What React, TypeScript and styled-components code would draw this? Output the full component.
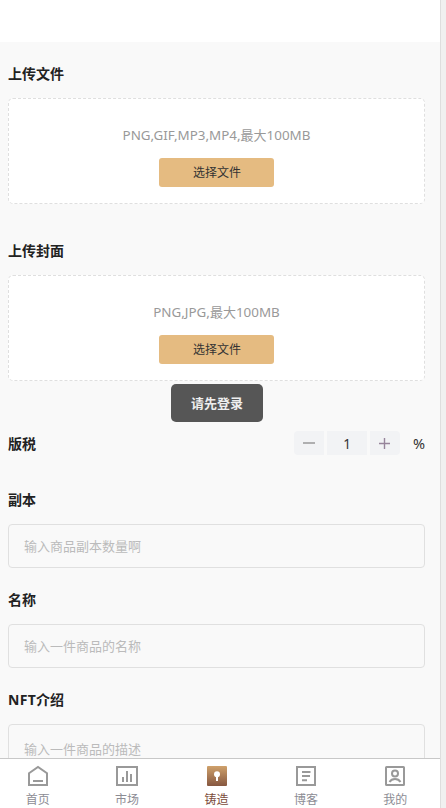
import React from "react";
import styled, { createGlobalStyle } from "styled-components";

const GlobalStyle = createGlobalStyle`
  * { box-sizing: border-box; }
  html, body { margin: 0; padding: 0; overflow: hidden; background: #f0f0f0; }
  body, button, input, textarea {
    font-family: "Noto Sans", "Noto Sans CJK SC", sans-serif;
  }
`;

const Screen = styled.div`
  position: relative;
  display: flex;
  flex-direction: column;
  width: 441px;
  height: 808px;
  overflow: hidden;
  background: #f9f9f9;
  border-right: 1px solid #dedede;
`;

const Header = styled.header`
  flex: none;
  height: 42px;
  background: #fff;
`;

const Form = styled.main`
  flex: 1;
  min-height: 0;
  overflow: hidden;
  padding: 20px 15px 0 8px;
`;

const Section = styled.section<{ $gap: number }>`
  margin-bottom: ${(p) => p.$gap}px;
`;

const Title = styled.h2`
  margin: 0 0 12px;
  height: 24px;
  font-size: 14px;
  line-height: 24px;
  font-weight: 700;
  color: #222;
`;

const Latin = styled.span`
  letter-spacing: 0.3px;
`;

const UploadBox = styled.div`
  display: flex;
  flex-direction: column;
  align-items: center;
  height: 106px;
  padding-top: 26px;
  background: #fff;
  border: 1px dashed #dfdfdf;
  border-radius: 5px;
`;

const Hint = styled.p`
  margin: 0 0 13px;
  height: 20px;
  font-size: 13px;
  line-height: 20px;
  color: #999;
  white-space: nowrap;
  span { font-size: 13.4px; }
`;

const PickButton = styled.button`
  width: 115px;
  height: 29px;
  padding: 0 0 0 1px;
  border: 0;
  border-radius: 3px;
  background: #e5bb81;
  color: #333;
  font-size: 12px;
  line-height: 29px;
`;

const RoyaltyRow = styled.div`
  display: flex;
  align-items: center;
  justify-content: space-between;
  height: 24px;
  margin-bottom: 33px;
  h2 { margin: 2px 0 0; }
`;

const Stepper = styled.div`
  display: flex;
  align-items: center;
  gap: 3px;
`;

const StepButton = styled.button<{ $side: "left" | "right" }>`
  display: flex;
  align-items: center;
  justify-content: center;
  width: 30px;
  height: 24px;
  padding: 0 1px 0 0;
  border: 0;
  background: #f2f3f5;
  border-radius: ${(p) => (p.$side === "left" ? "4px 0 0 4px" : "0 4px 4px 0")};
`;

const Count = styled.span`
  width: 40px;
  height: 24px;
  background: #f2f3f5;
  color: #323233;
  font-size: 13.5px;
  line-height: 26px;
  text-align: center;
`;

const Percent = styled.span`
  width: 12px;
  margin-left: 10px;
  font-size: 14.5px;
  line-height: 24px;
  color: #333;
`;

const Field = styled.input`
  display: block;
  width: 100%;
  height: 44px;
  padding: 0 15px;
  border: 1px solid #e0e0e0;
  border-radius: 4px;
  background: transparent;
  font-size: 13px;
  outline: 0;
  &::placeholder { color: #bbb; opacity: 1; }
`;

const Area = styled.textarea`
  display: block;
  width: 100%;
  height: 90px;
  padding: 14px 15px;
  border: 1px solid #e0e0e0;
  border-radius: 4px;
  background: transparent;
  font-size: 13px;
  line-height: 20px;
  resize: none;
  outline: 0;
  &::placeholder { color: #bbb; opacity: 1; }
`;

const Toast = styled.div`
  position: absolute;
  top: 384px;
  left: 171px;
  width: 92px;
  height: 38px;
  border-radius: 5px;
  background: #565656;
  color: #eee;
  font-size: 13px;
  font-weight: 700;
  line-height: 38px;
  text-align: center;
`;

const TabBar = styled.nav`
  flex: none;
  display: flex;
  height: 50px;
  background: #fff;
  border-top: 1px solid #c8c8c8;
`;

const Tabs = styled.div`
  display: flex;
  width: 447px;
  flex: none;
  margin-left: -7px;
`;

const Tab = styled.a<{ $active?: boolean }>`
  flex: 1 1 0;
  display: flex;
  flex-direction: column;
  align-items: center;
  padding: 6px 0 0;
  color: ${(p) => (p.$active ? "#7b4b3a" : "#8c8c94")};
  font-size: 12px;
  line-height: 17px;
  svg { display: block; flex: none; margin-bottom: 4px; }
`;

const line = { fill: "none", stroke: "#999", strokeWidth: 2 };

const HomeIcon = () => (
  <svg width="22" height="22" viewBox="0 0 22 22" {...line}>
    <path d="M2 8.2 11 2l9 6.200V20H2z" />
    <path d="M6 16h10" />
  </svg>
);

const MarketIcon = () => (
  <svg width="22" height="22" viewBox="0 0 22 22" {...line}>
    <path d="M1 2h20v18H1z" />
    <path d="M7 12v5M11 6v11M15 9v8" />
  </svg>
);

const MintIcon = () => (
  <svg width="22" height="22" viewBox="0 0 22 22">
    <defs>
      <linearGradient id="mint" x1="0" y1="0" x2="0" y2="1">
        <stop offset="0" stopColor="#cfa16b" />
        <stop offset="1" stopColor="#865740" />
      </linearGradient>
    </defs>
    <rect x="1" y="1" width="20" height="20" rx="1" fill="url(#mint)" />
    <circle cx="11" cy="9.2" r="3" fill="#fff" />
    <path d="M11 9v7" stroke="#fff" strokeWidth="2" />
  </svg>
);

const BlogIcon = () => (
  <svg width="22" height="22" viewBox="0 0 22 22" {...line}>
    <path d="M2 2h18v18H2z" />
    <path d="M7 7h8.500M7 11h8M7 15.300h5" />
  </svg>
);

const MineIcon = () => (
  <svg width="22" height="22" viewBox="0 0 22 22" {...line}>
    <rect x="2" y="2" width="18" height="18" rx="0.5" />
    <circle cx="11" cy="8.5" r="3" />
    <path d="M5.500 17c1.200-2 3-3 5.500-3s4.300 1 5.500 3" />
  </svg>
);

const tabs = [
  { label: "首页", Icon: HomeIcon },
  { label: "市场", Icon: MarketIcon },
  { label: "铸造", Icon: MintIcon, active: true },
  { label: "博客", Icon: BlogIcon },
  { label: "我的", Icon: MineIcon },
];

export default function App() {
  return (
    <>
      <GlobalStyle />
      <Screen>
        <Header />
        <Form>
          <Section $gap={35}>
            <Title>上传文件</Title>
            <UploadBox>
              <Hint><span>PNG,GIF,MP3,MP4,</span>最大<span>100MB</span></Hint>
              <PickButton>选择文件</PickButton>
            </UploadBox>
          </Section>
          <Section $gap={50}>
            <Title>上传封面</Title>
            <UploadBox>
              <Hint><span>PNG,JPG,</span>最大<span>100MB</span></Hint>
              <PickButton>选择文件</PickButton>
            </UploadBox>
          </Section>
          <RoyaltyRow>
            <Title>版税</Title>
            <Stepper>
              <StepButton $side="left" aria-label="-">
                <svg width="12" height="12" viewBox="0 0 12 12" stroke="#999" strokeWidth="1.5">
                  <path d="M0 6h12" />
                </svg>
              </StepButton>
              <Count>1</Count>
              <StepButton $side="right" aria-label="+">
                <svg width="11" height="11" viewBox="0 0 11 11" stroke="#97859b" strokeWidth="1.4">
                  <path d="M0 5.500h11M5.500 0v11" />
                </svg>
              </StepButton>
              <Percent>%</Percent>
            </Stepper>
          </RoyaltyRow>
          <Section $gap={20}>
            <Title>副本</Title>
            <Field placeholder="输入商品副本数量啊" />
          </Section>
          <Section $gap={20}>
            <Title>名称</Title>
            <Field placeholder="输入一件商品的名称" />
          </Section>
          <Section $gap={20}>
            <Title><Latin>NFT</Latin>介绍</Title>
            <Area placeholder="输入一件商品的描述" />
          </Section>
        </Form>
        <TabBar>
          <Tabs>
            {tabs.map(({ label, Icon, active }) => (
              <Tab key={label} $active={active}>
                <Icon />
                {label}
              </Tab>
            ))}
          </Tabs>
        </TabBar>
        <Toast>请先登录</Toast>
      </Screen>
    </>
  );
}
